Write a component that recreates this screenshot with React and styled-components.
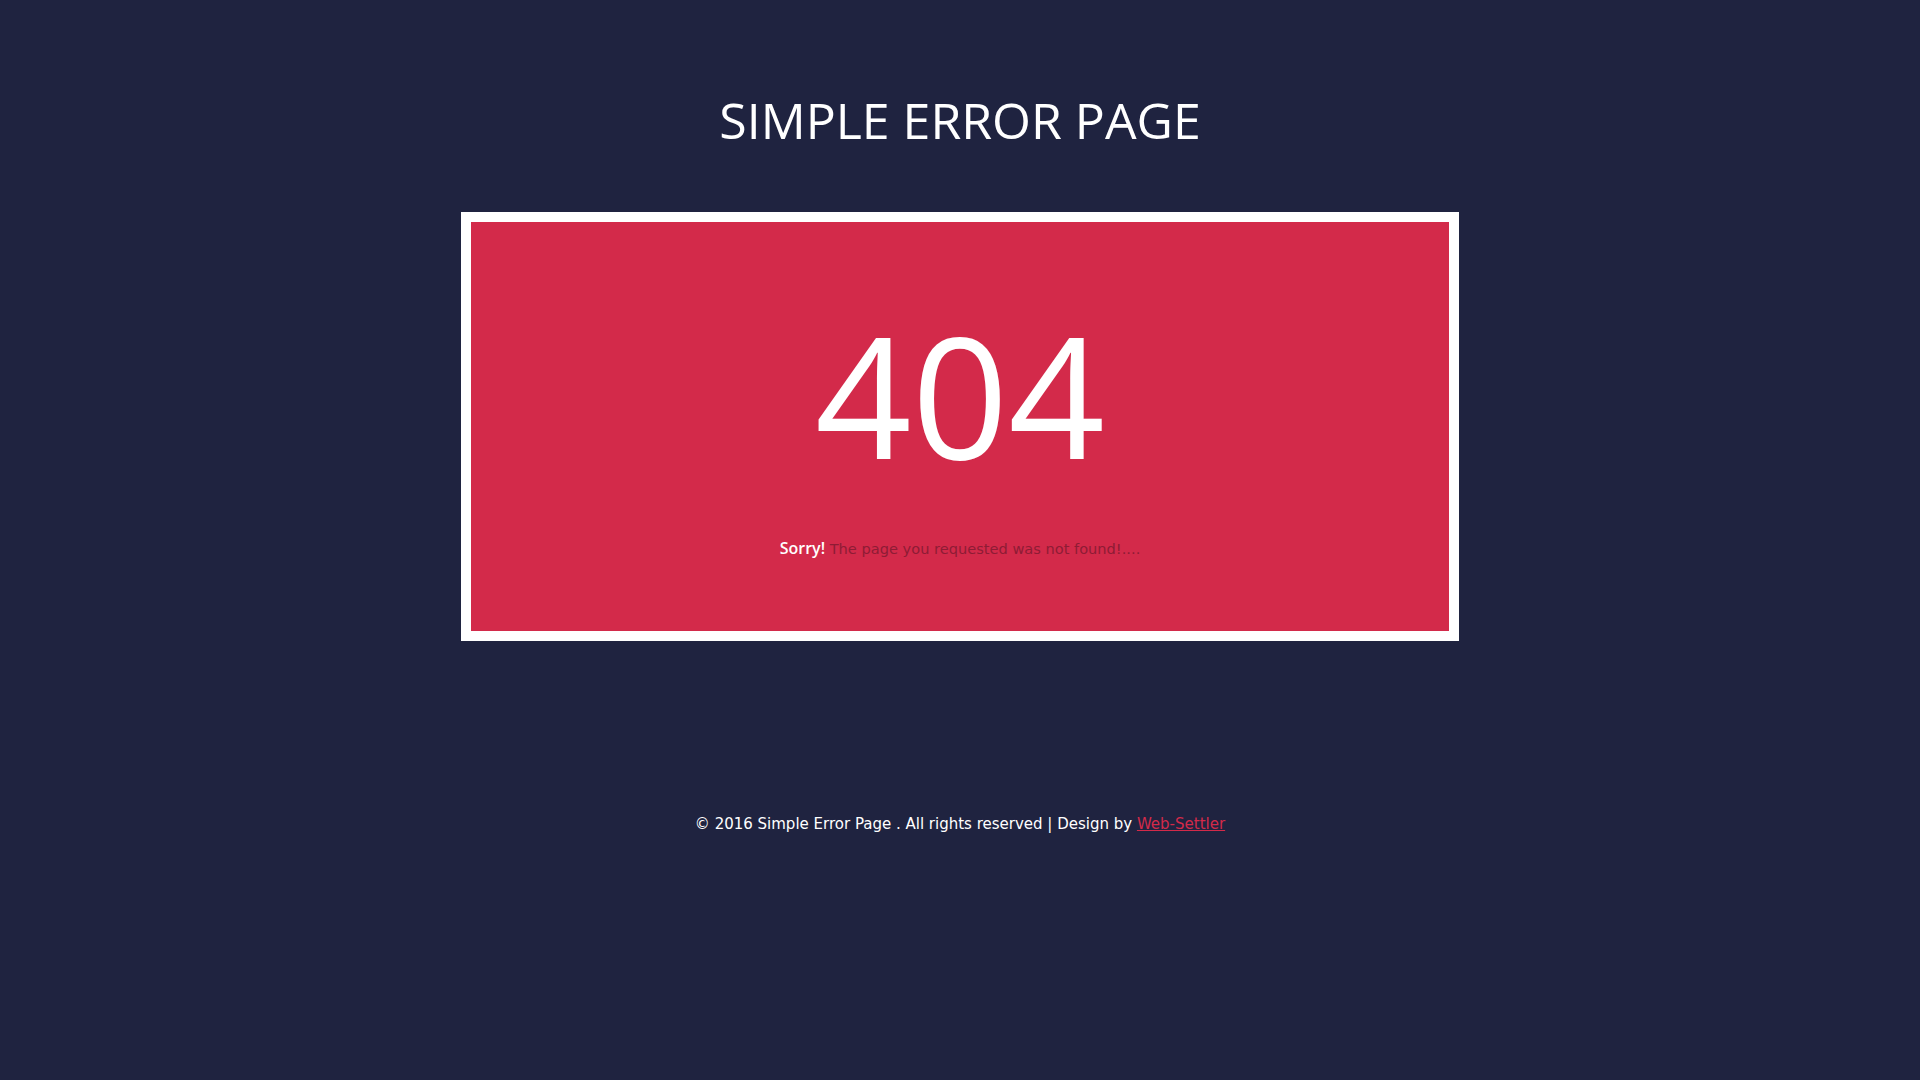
import React from "react";
import styled, { createGlobalStyle } from "styled-components";

const Global = createGlobalStyle`
  html, body { margin: 0; padding: 0; background: #1f2340; }
  body { font-family: "Open Sans", "Noto Sans", sans-serif; }
`;

const Page = styled.div`
  min-height: 1080px;
  background: #1f2340;
  display: flex;
  flex-direction: column;
  align-items: center;
`;

const Title = styled.h1`
  margin: 88px 0 0;
  font-family: "Open Sans", sans-serif;
  font-weight: 400;
  font-size: 50px;
  line-height: 64px;
  color: #ffffff;
  letter-spacing: 0;
`;

const Frame = styled.div`
  margin-top: 60px;
  width: 998px;
  box-sizing: border-box;
  border: 10px solid #ffffff;
  background: #d32a4a;
  height: 429px;
  display: flex;
  flex-direction: column;
  align-items: center;
`;

const Code = styled.div`
  margin-top: 72px;
  font-family: "Open Sans", sans-serif;
  font-size: 169px;
  line-height: 200px;
  color: #ffffff;
`;

const Message = styled.p`
  margin: 43px 0 0;
  font-family: "DejaVu Sans", Verdana, sans-serif;
  font-size: 14.6px;
  color: #8e1c35;
`;

const Strong = styled.span`
  color: #ffffff;
  font-family: "Open Sans", sans-serif;
  font-weight: 600;
  font-size: 16px;
`;

const Footer = styled.p`
  margin: 174px 0 0;
  font-family: "DejaVu Sans", Verdana, sans-serif;
  font-size: 15px;
  color: #ffffff;
`;

const Link = styled.a`
  color: #d32a4a;
  text-decoration: underline;
`;

export default function App() {
  return (
    <>
      <Global />
      <Page>
        <Title>SIMPLE ERROR PAGE</Title>
        <Frame>
          <Code>404</Code>
          <Message>
            <Strong>Sorry!</Strong> The page you requested was not found!....
          </Message>
        </Frame>
        <Footer>
          © 2016 Simple Error Page . All rights reserved | Design by <Link href="#">Web-Settler</Link>
        </Footer>
      </Page>
    </>
  );
}
